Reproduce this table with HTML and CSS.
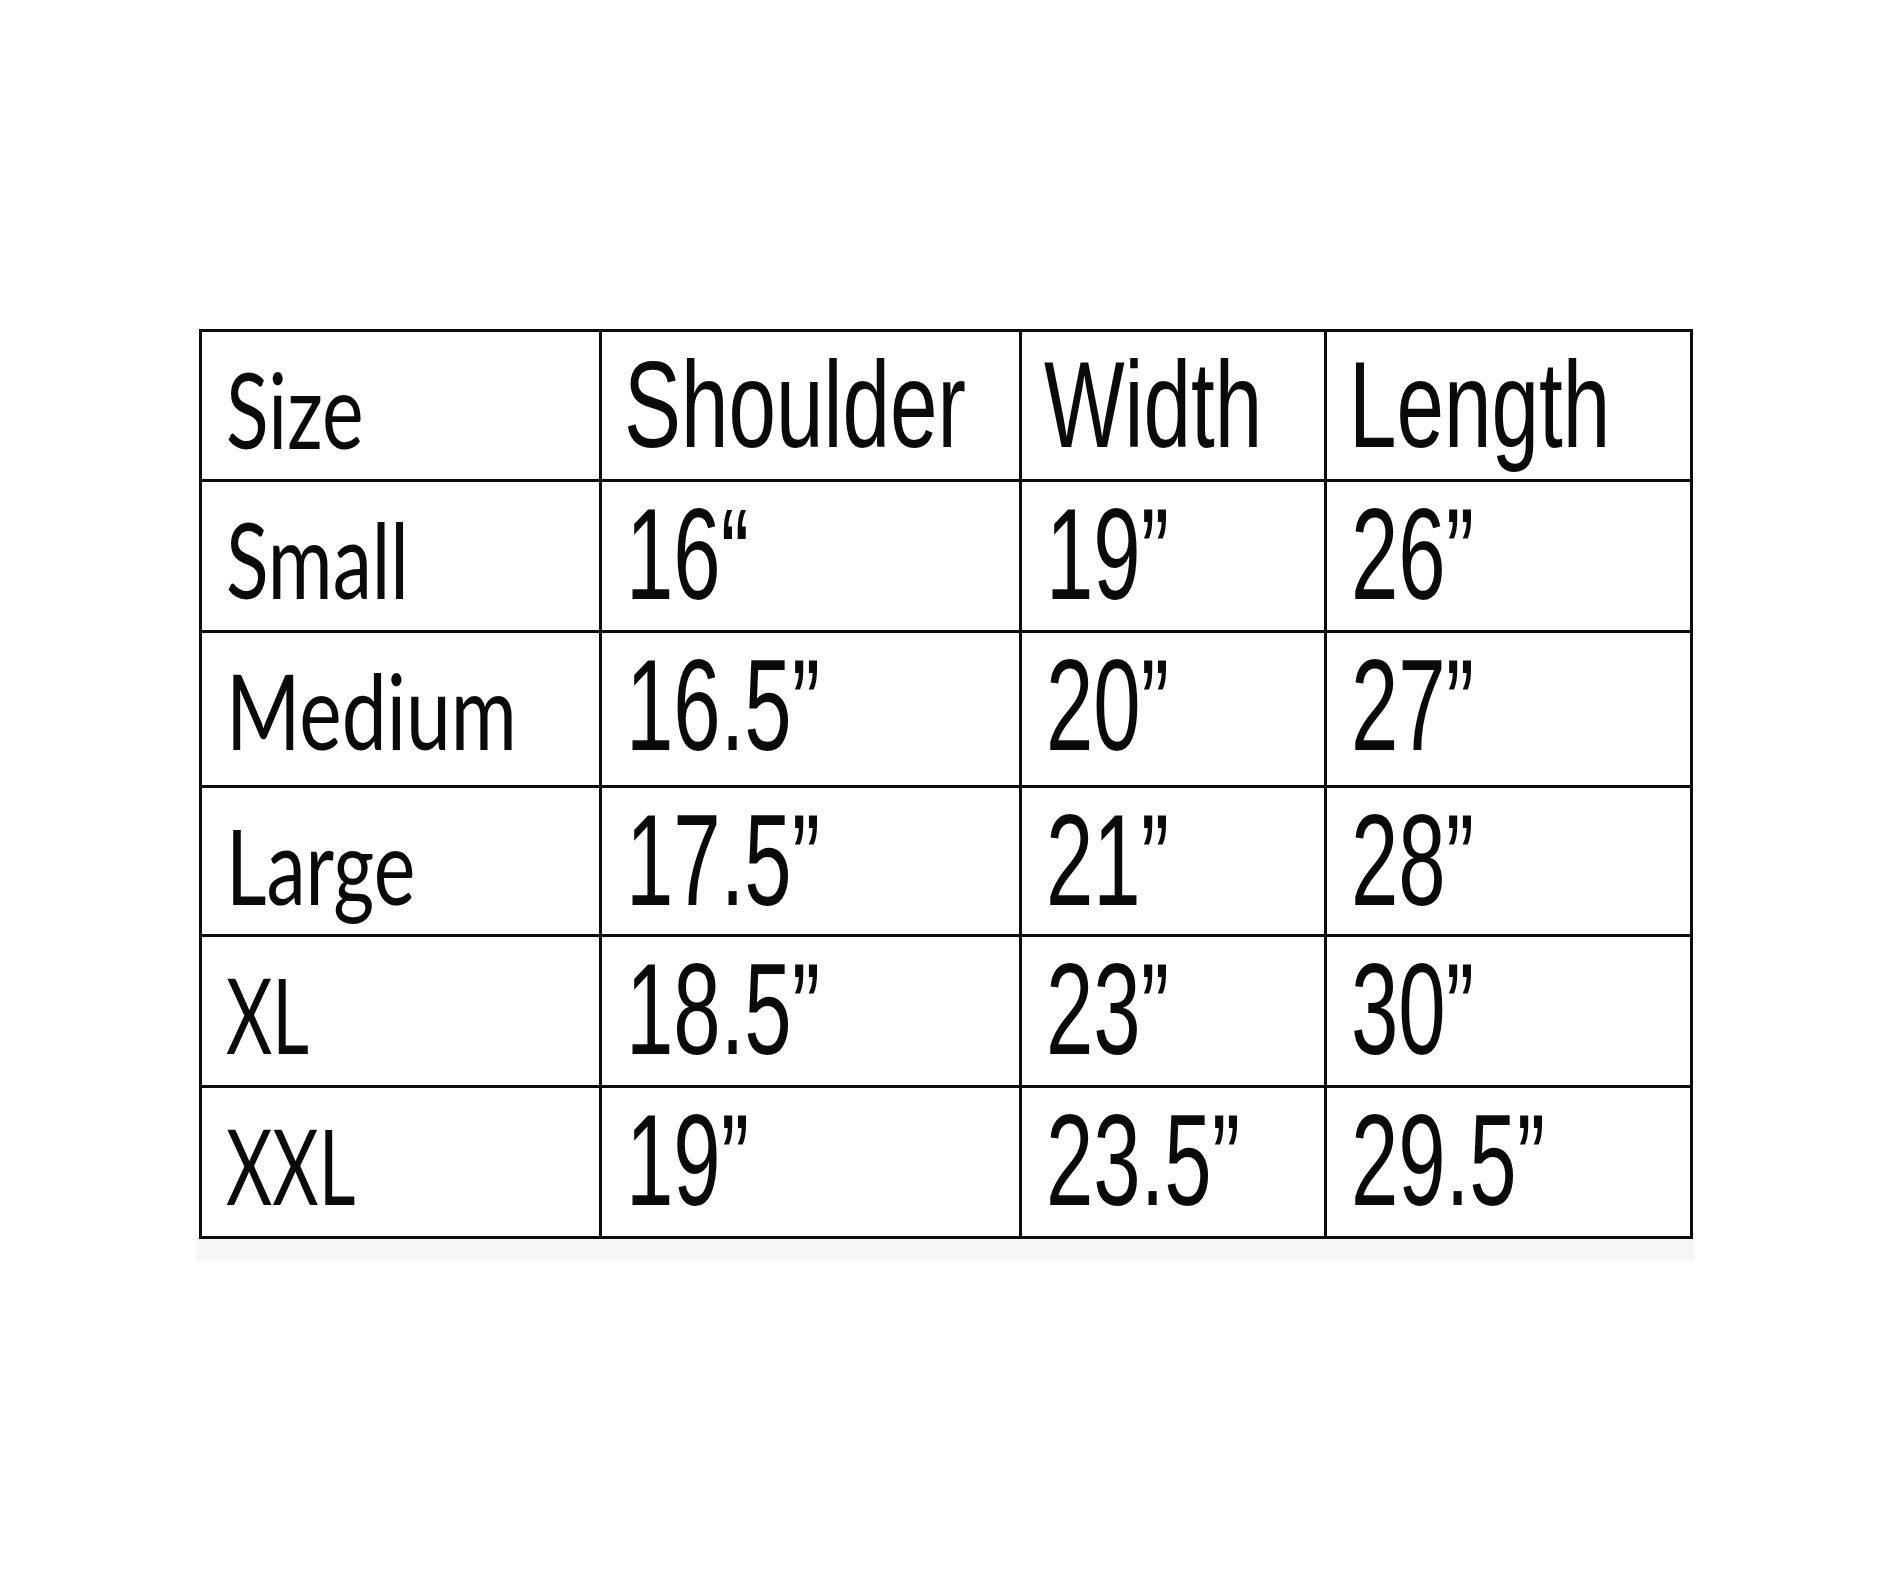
FILE: index.html
```html
<!DOCTYPE html>
<html lang="en">
<head>
<meta charset="utf-8">
<title>Size Chart</title>
<link rel="stylesheet" href="styles.css">
</head>
<body>
<div class="page">
  <div class="chart">
    <div class="cell label"><span>Size</span></div>
    <div class="cell head"><span>Shoulder</span></div>
    <div class="cell head"><span>Width</span></div>
    <div class="cell head"><span>Length</span></div>

    <div class="cell label"><span>Small</span></div>
    <div class="cell num"><span>16“</span></div>
    <div class="cell num"><span>19”</span></div>
    <div class="cell num"><span>26”</span></div>

    <div class="cell label wide"><span>Medium</span></div>
    <div class="cell num"><span>16.5”</span></div>
    <div class="cell num"><span>20”</span></div>
    <div class="cell num"><span>27”</span></div>

    <div class="cell label"><span>Large</span></div>
    <div class="cell num"><span>17.5”</span></div>
    <div class="cell num"><span>21”</span></div>
    <div class="cell num"><span>28”</span></div>

    <div class="cell label narrow"><span>XL</span></div>
    <div class="cell num"><span>18.5”</span></div>
    <div class="cell num"><span>23”</span></div>
    <div class="cell num"><span>30”</span></div>

    <div class="cell label narrow"><span>XXL</span></div>
    <div class="cell num"><span>19”</span></div>
    <div class="cell num"><span>23.5”</span></div>
    <div class="cell num"><span>29.5”</span></div>
  </div>
  <div class="shadow"></div>
</div>
</body>
</html>
```

FILE: styles.css
```css
html, body {
  margin: 0;
  background: #ffffff;
}

.page {
  padding: 329px 0 0 199px;
}

.chart {
  display: grid;
  grid-template-columns: 397px 417px 302px 363px;
  grid-template-rows: 147px 148px 152px 146px 148px 148px;
  gap: 3px;
  padding: 3px;
  background: #0c0c0c;
  width: max-content;
}

.cell {
  background: #ffffff;
  overflow: hidden;
  padding-left: 22px;
  color: #0a0a0a;
}

.cell span {
  display: inline-block;
  white-space: nowrap;
  transform-origin: 0 0;
}

.label {
  padding-left: 24px;
  padding-top: 24px;
}

.label span {
  font-family: Lato, "Open Sans", sans-serif;
  font-size: 105px;
  line-height: 105px;
  transform: scaleX(0.75);
}

.label.wide span {
  transform: scaleX(0.765);
}

.label.narrow span {
  transform: scaleX(0.68);
}

.head {
  padding-top: 12px;
}

.head span {
  font-family: "Liberation Sans", Arial, sans-serif;
  font-size: 122px;
  line-height: 122px;
  transform: scaleX(0.70);
}

.num {
  padding-top: 7px;
  padding-left: 24px;
}

.num span {
  font-family: "Liberation Sans", Arial, sans-serif;
  font-size: 130px;
  line-height: 130px;
  transform: scaleX(0.655);
}

.shadow {
  width: 1498px;
  height: 22px;
  margin-left: -3px;
  background: #f6f6f6;
}
```
